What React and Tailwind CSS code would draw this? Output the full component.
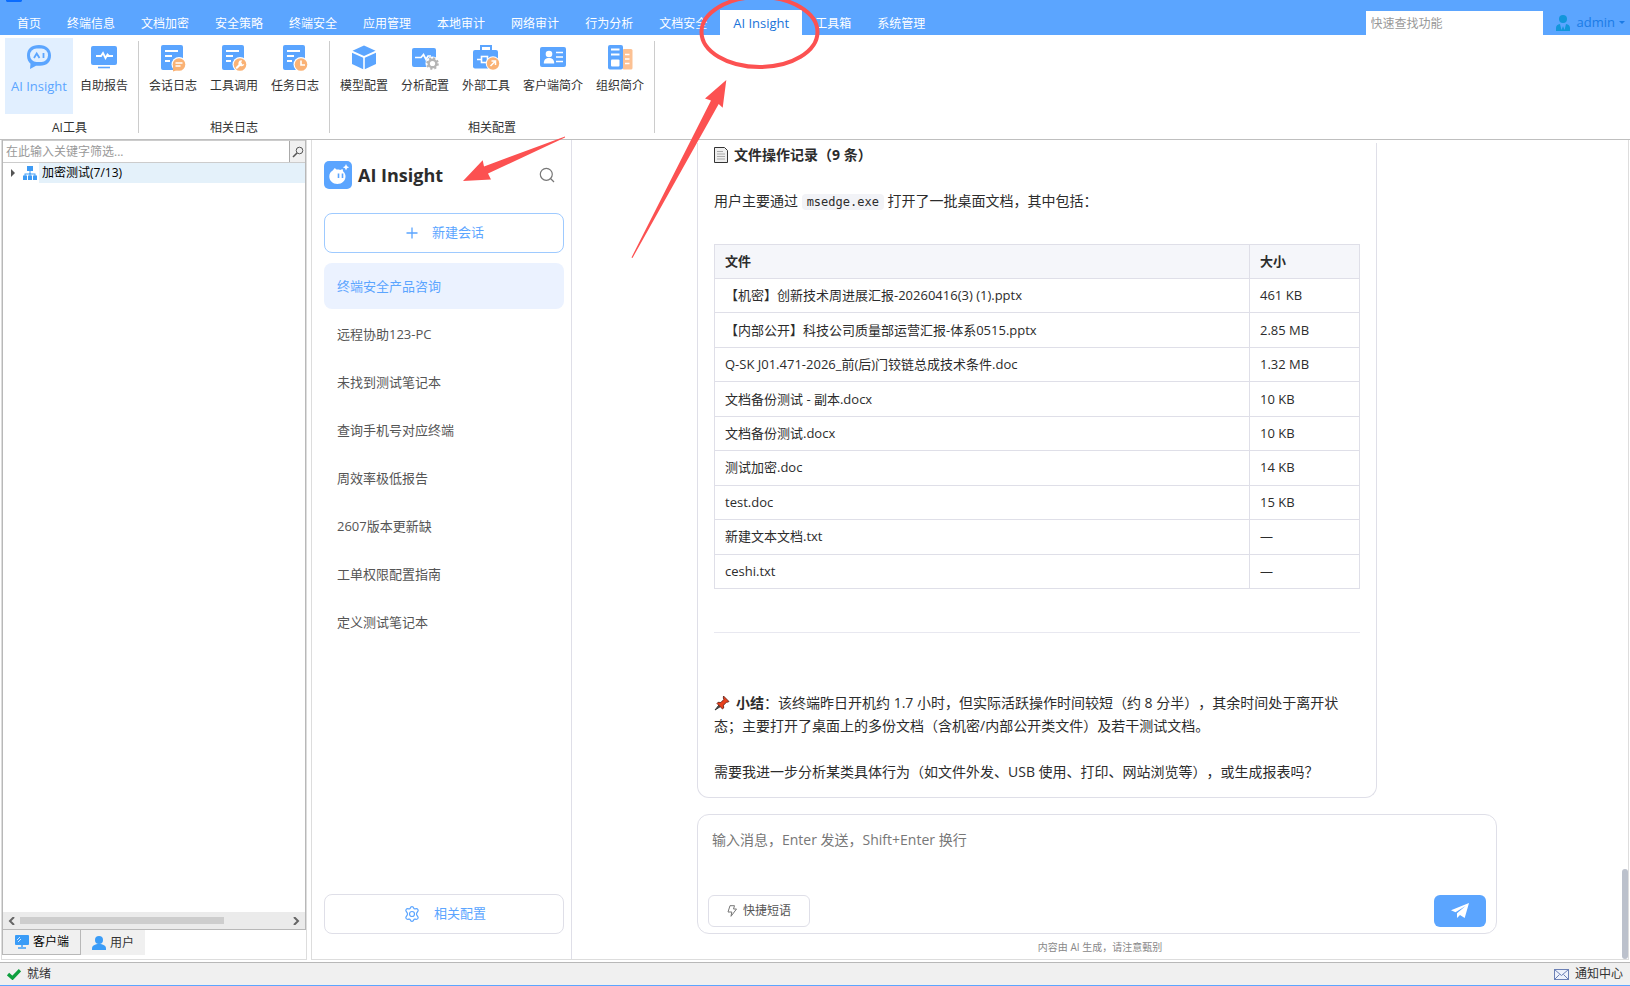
import React, { useState } from 'react';

const menus = [
  '首页', '终端信息', '文档加密', '安全策略', '终端安全', '应用管理', '本地审计',
  '网络审计', '行为分析', '文档安全', 'AI Insight', '工具箱', '系统管理',
];

const sessions = [
  '终端安全产品咨询', '远程协助123-PC', '未找到测试笔记本', '查询手机号对应终端',
  '周效率极低报告', '2607版本更新缺', '工单权限配置指南', '定义测试笔记本',
];

const files = [
  ['【机密】创新技术周进展汇报-20260416(3) (1).pptx', '461 KB'],
  ['【内部公开】科技公司质量部运营汇报-体系0515.pptx', '2.85 MB'],
  ['Q-SK J01.471-2026_前(后)门铰链总成技术条件.doc', '1.32 MB'],
  ['文档备份测试 - 副本.docx', '10 KB'],
  ['文档备份测试.docx', '10 KB'],
  ['测试加密.doc', '14 KB'],
  ['test.doc', '15 KB'],
  ['新建文本文档.txt', '—'],
  ['ceshi.txt', '—'],
];

const BLUE = '#5ba5ff';
const ORANGE = '#fab275';

function Icon({ children, className = 'size-7' }) {
  return (
    <svg viewBox="0 0 28 28" className={className} fill="none" aria-hidden="true">
      {children}
    </svg>
  );
}

function ChatIcon() {
  return (
    <Icon>
      <path d="M14 1C6.500 1 2 5 2 11.500c0 4 1.500 6.500 3.500 8.200L5 25l6-3.200h4c7 0 11-4 11-10.300S21.500 1 14 1z" fill={BLUE} />
      <rect x="5" y="4.500" width="18" height="13.500" rx="6.500" fill="#e1efff" />
      <path d="M9 14l2.700-4.500 2.800 4.500M18.500 9v5" stroke={BLUE} strokeWidth="1.800" />
    </Icon>
  );
}

function ReportIcon() {
  return (
    <Icon>
      <rect x="1" y="2" width="26" height="19" rx="2" fill={BLUE} />
      <path d="M6 12h5l2-3 2.500 5 2-3.500 1.500 1.500h4" stroke="#fff" strokeWidth="1.800" />
      <path d="M8 23.500h12" stroke={BLUE} strokeWidth="1.600" />
    </Icon>
  );
}

function LogPage({ children }) {
  return (
    <Icon>
      <rect x="2" y="1" width="22" height="25" rx="2" fill={BLUE} />
      <path d="M6 7h13M6 12h7M6 17h5" stroke="#fff" strokeWidth="1.800" />
      <circle cx="20" cy="20.500" r="7.500" fill="#fff" />
      <circle cx="20" cy="20.500" r="6.300" fill={ORANGE} />
      {children}
    </Icon>
  );
}

function SessionLogIcon() {
  return (
    <LogPage>
      <path d="M14 21v6.500l5-1.500z" fill={ORANGE} />
      <path d="M16.500 19h7M16.500 22h5" stroke="#fff" strokeWidth="1.500" />
    </LogPage>
  );
}

function ToolCallIcon() {
  return (
    <LogPage>
      <path d="M16.800 23.700l4-4" stroke="#fff" strokeWidth="2.200" strokeLinecap="round" />
      <path d="M22 16.300a3 3 0 1 0 2.300 3.800l-2 .300-1.200-1.300z" fill="#fff" />
    </LogPage>
  );
}

function TaskLogIcon() {
  return (
    <LogPage>
      <path d="M20 16.500V21h4" stroke="#fff" strokeWidth="1.600" />
    </LogPage>
  );
}

function CubeIcon() {
  return (
    <Icon>
      <path d="M14 1.500l11.500 5.200L14 12 2.500 6.700z" fill={BLUE} />
      <path d="M2 8.800l11.200 5v11.500L2 20zM26 8.800l-11.200 5v11.500L26 20z" fill={BLUE} />
    </Icon>
  );
}

function AnalyzeIcon() {
  return (
    <Icon>
      <rect x="1" y="4" width="24" height="19" rx="2" fill={BLUE} />
      <path d="M4 13.500h6l2.500-3 2.500 5 2-3.500h3" stroke="#fff" strokeWidth="1.700" />
      <circle cx="21.500" cy="19.500" r="7" fill="#fff" />
      <circle cx="21.500" cy="19.500" r="5" fill="#b5b5b5" />
      <circle cx="21.500" cy="19.500" r="5.300" stroke="#b5b5b5" strokeWidth="2" strokeDasharray="2.100 2.060" />
      <circle cx="21.500" cy="19.500" r="2.600" fill="#fff" />
    </Icon>
  );
}

function ToolboxIcon() {
  return (
    <Icon>
      <path d="M9 6.500V2h10v4.500" stroke={BLUE} strokeWidth="2" />
      <rect x="1" y="6" width="25" height="18.500" rx="2" fill={BLUE} />
      <path d="M5 15.500h5m5 0h5" stroke="#fff" strokeWidth="1.600" />
      <rect x="9.500" y="12.500" width="6" height="6" stroke="#fff" strokeWidth="1.600" />
      <circle cx="21" cy="19.500" r="7.200" fill="#fff" />
      <circle cx="21" cy="19.500" r="6.200" fill={ORANGE} />
      <path d="M18.500 22l5-5m-4 0h4v4" stroke="#fff" strokeWidth="1.500" />
    </Icon>
  );
}

function ProfileIcon() {
  return (
    <Icon>
      <rect x="1" y="3" width="26" height="20" rx="2" fill={BLUE} />
      <circle cx="10" cy="10" r="3.300" fill="#fff" />
      <path d="M4.800 19.500c0-4 2-5.500 5.200-5.500s5.200 1.500 5.200 5.500z" fill="#fff" />
      <path d="M17 8.500h7M17 13h7M17 17.500h7" stroke="#fff" strokeWidth="1.600" />
    </Icon>
  );
}

function OrgIcon() {
  return (
    <Icon>
      <rect x="16.500" y="5" width="10" height="20.500" rx="1.500" fill="#fcc193" />
      <path d="M19 10.500h4.500M19 15h4.500M19 19.500h4.500" stroke="#fff" strokeWidth="1.600" />
      <rect x="2" y="1" width="15" height="24.500" rx="2" fill={BLUE} />
      <path d="M5 5.500h8.500M5 10.500h8.500" stroke="#fff" strokeWidth="1.800" />
      <rect x="5" y="15.500" width="8.500" height="7" rx="1" fill="#fff" />
    </Icon>
  );
}

const groups = [
  { name: 'AI工具', items: [['AI Insight', ChatIcon], ['自助报告', ReportIcon]] },
  { name: '相关日志', items: [['会话日志', SessionLogIcon], ['工具调用', ToolCallIcon], ['任务日志', TaskLogIcon]] },
  {
    name: '相关配置',
    items: [
      ['模型配置', CubeIcon], ['分析配置', AnalyzeIcon], ['外部工具', ToolboxIcon],
      ['客户端简介', ProfileIcon], ['组织简介', OrgIcon],
    ],
  },
];

function TopMenu({ active, onChange }) {
  return (
    <header className="flex h-[35px] shrink-0 items-end justify-between bg-[#5ba5ff] pl-1 text-xs text-white">
      <nav className="flex">
        {menus.map((name) => (
          <button
            key={name}
            type="button"
            onClick={() => onChange(name)}
            className={`h-[25px] whitespace-nowrap px-[13px] pt-[3px] ${
              name === active ? 'bg-white text-[13px] text-[#1a73d9]' : ''
            }`}
          >
            {name}
          </button>
        ))}
      </nav>
      <div className="flex items-center">
        <input
          type="text"
          aria-label="快速查找功能"
          placeholder="快速查找功能"
          className="h-6 w-[177px] bg-white px-[5px] text-black outline-none placeholder:text-[#999]"
        />
        <button type="button" className="flex items-center gap-[7px] pr-[5px] pl-[13px] text-[13px] text-[#1a7be6]">
          <svg viewBox="0 0 14 16" className="h-4 w-[14px]" fill="#1296db" aria-hidden="true">
            <circle cx="7" cy="4" r="4" />
            <path d="M0 16v-3c0-2.500 1.500-3.500 4-4l1.500 6L7 11l1.500 4L10 9c2.500.500 4 1.500 4 4v3z" />
          </svg>
          <span className="flex items-center gap-1">
            admin
            <svg viewBox="0 0 6 4" className="h-1 w-[6px]" aria-hidden="true">
              <path d="M0 0h6L3 3z" fill="#1a7be6" />
            </svg>
          </span>
        </button>
      </div>
    </header>
  );
}

function Ribbon() {
  return (
    <div className="flex h-[105px] shrink-0 gap-px border-b border-[#bfbfbf] bg-white pl-px text-xs text-[#333]">
      {groups.map((group) => (
        <section key={group.name} className="relative flex flex-col items-center justify-between px-1 pt-[3px] pb-[3px]">
          <div className="flex gap-px">
            {group.items.map(([label, Glyph]) => (
              <button
                key={label}
                type="button"
                className={`flex h-[76px] flex-col items-center gap-[6px] px-[6px] pt-[6px] whitespace-nowrap ${
                  label === 'AI Insight' ? 'bg-[#e1efff] text-[13px] text-[#5ba5ff]' : ''
                }`}
              >
                <Glyph />
                <span className="leading-4">{label}</span>
              </button>
            ))}
          </div>
          <h2 className="leading-4">{group.name}</h2>
          <span className="absolute top-[6px] -right-px bottom-[6px] w-px bg-[#ccc]" />
        </section>
      ))}
    </div>
  );
}

function ClientTree() {
  return (
    <aside className="ml-px flex w-[306px] shrink-0 flex-col border-r border-b border-l border-[#ddd] bg-white text-xs">
      <div className="flex flex-1 flex-col border-x border-[#b8b8b8]">
        <div className="flex h-[23px] border-y border-[#ccc]">
          <input
            type="text"
            aria-label="筛选终端"
            placeholder="在此输入关键字筛选..."
            className="min-w-0 flex-1 px-[3px] outline-none placeholder:text-[#999]"
          />
          <button type="button" aria-label="筛选" className="flex w-4 items-center justify-center border-l border-[#aaa] bg-[#f0f0f0]">
            <svg viewBox="0 0 12 12" className="size-3" fill="none" stroke="#555" aria-hidden="true">
              <circle cx="7.500" cy="4.500" r="3.300" />
              <path d="M5 7L1 11" strokeWidth="1.600" />
            </svg>
          </button>
        </div>
        <button type="button" className="flex h-5 items-center text-left">
          <svg viewBox="0 0 36 20" className="h-5 w-9 shrink-0" aria-hidden="true">
            <path d="M8 6l4 4-4 4z" fill="#555" />
            <g fill="#3d9bf5">
              <rect x="24" y="3" width="6" height="5" />
              <path d="M26.500 8h1v2.500H32.500V13h-1v-1.500h-9V13h-1v-2.500h5z" />
              <rect x="20" y="12.500" width="4" height="4.500" />
              <rect x="25" y="12.500" width="4" height="4.500" />
              <rect x="30" y="12.500" width="4" height="4.500" />
              <rect x="26.500" y="10" width="1" height="3" />
            </g>
          </svg>
          <span className="h-full flex-1 bg-[#e4f1fa] pl-[3px] leading-5 text-black">加密测试(7/13)</span>
        </button>
        <div className="flex-1" />
        <div className="flex h-[18px] items-center justify-between border-b border-[#b8b8b8] bg-[#ebebeb] px-[5px]">
          <svg viewBox="0 0 7 8" className="h-2 w-[7px]" fill="none" stroke="#666" strokeWidth="2" aria-hidden="true">
            <path d="M6 0L2 4l4 4" />
          </svg>
          <span className="mr-auto ml-[5px] h-[7px] w-[70%] bg-[#cdcdcd]" />
          <svg viewBox="0 0 7 8" className="h-2 w-[7px]" fill="none" stroke="#666" strokeWidth="2" aria-hidden="true">
            <path d="M1 0l4 4-4 4" />
          </svg>
        </div>
      </div>
      <div className="flex h-[29px] items-start">
        <button type="button" className="flex h-[25px] w-[79px] items-center gap-1 border-r border-b border-l border-[#b8b8b8] bg-[#f0f0f0] pl-3 text-black">
          <svg viewBox="0 0 14 14" className="size-[14px]" aria-hidden="true">
            <rect width="14" height="10" rx="1" fill="#3a9cf7" />
            <path d="M2 5l3-3M3 7l3-3" stroke="#cfe6ff" />
            <path d="M6 10h2v2H6zM3 12h8v2H3z" fill="#6bb2f5" />
          </svg>
          客户端
        </button>
        <button type="button" className="flex h-[25px] w-16 items-center gap-1 bg-[#f0f0f0] pl-[11px] text-[#333]">
          <svg viewBox="0 0 14 14" className="size-[14px]" fill="#3a9cf7" aria-hidden="true">
            <circle cx="7" cy="4" r="4" />
            <path d="M0 14v-1.500C0 9.500 3 8 7 8s7 1.500 7 4.500V14z" />
          </svg>
          用户
        </button>
      </div>
    </aside>
  );
}

function Sessions() {
  const [current, setCurrent] = useState(0);

  return (
    <section className="flex w-[260px] shrink-0 flex-col border-r border-[#dfdfe8] pt-[21px] pr-[7px] pb-[25px] pl-3">
      <div className="flex h-7 items-center">
        <svg viewBox="0 0 28 28" className="size-7" fill="none" aria-hidden="true">
          <rect width="28" height="28" rx="5" fill="#5ba5ff" />
          <path d="M5.300 15.500c0-2.700 1.500-4.800 3.400-5.900L10.800 7l1.700 1.500c1.300-.100 2.500 0 3.700.400L18.500 8l.700 2.500c1.500 1.200 2.300 3 2.300 5 0 4.300-3.500 7.500-8.100 7.500s-8.100-3.200-8.100-7.500z" fill="#fff" />
          <path d="M14.500 12.500v4.500M18.500 12.500v4.500" stroke="#5ba5ff" strokeWidth="1.600" />
          <path d="M22 3l1 2.200 2.200 1-2.200 1L22 9.500l-1-2.300-2.200-1 2.200-1z" fill="#fff" />
        </svg>
        <h1 className="ml-[6px] flex-1 text-lg font-bold text-[#2c2c2c]">AI Insight</h1>
        <button type="button" aria-label="搜索会话" className="mr-[9px]">
          <svg viewBox="0 0 16 16" className="size-4" fill="none" stroke="#777" strokeWidth="1.200" aria-hidden="true">
            <circle cx="7.300" cy="7.300" r="6" />
            <path d="M11.500 11.500l3.500 3.500" />
          </svg>
        </button>
      </div>

      <button type="button" className="mt-6 flex h-10 shrink-0 items-center justify-center gap-[14px] rounded-lg border border-[#9ecaff] pl-[2px] text-[13px] text-[#5ba5ff]">
        <svg viewBox="0 0 12 12" className="size-3" stroke="#5ba5ff" strokeWidth="1.300" aria-hidden="true">
          <path d="M6 .500v11M.500 6h11" />
        </svg>
        新建会话
      </button>

      <ul className="mt-[10px] flex flex-1 flex-col gap-[2px] text-[13px]">
        {sessions.map((name, index) => (
          <li key={name}>
            <button
              type="button"
              onClick={() => setCurrent(index)}
              className={`h-[46px] w-full rounded-lg px-[13px] pt-[2px] text-left ${
                index === current ? 'bg-[#ebf2ff] text-[#5ba5ff]' : 'text-[#555]'
              }`}
            >
              {name}
            </button>
          </li>
        ))}
      </ul>

      <button type="button" className="flex h-10 shrink-0 items-center justify-center gap-[14px] rounded-lg border border-[#dfdfe8] pl-[2px] text-[13px] text-[#5ba5ff]">
        <svg viewBox="0 0 16 16" className="size-4" fill="none" stroke="#5ba5ff" strokeWidth="1.200" aria-hidden="true">
          <path d="M6.200 2.200Q6.700.600 8 .600t1.800 1.600q.300.900 1.500.600 1.800-.500 2.600.700t-.500 2.500q-.900.900-.900 2t.900 2q1.300 1.300.500 2.500t-2.600.700q-1.200-.300-1.500.600-.500 1.600-1.800 1.600t-1.800-1.600q-.300-.900-1.500-.600-1.800.500-2.600-.700t.500-2.500q.900-.900.900-2t-.900-2Q1.300 4.700 2.100 3.500t2.600-.700q1.200.300 1.500-.600z" />
          <circle cx="8" cy="8" r="2.500" />
        </svg>
        相关配置
      </button>
    </section>
  );
}

function Answer() {
  return (
    <article className="w-[85%] rounded-b-xl border-x border-b border-[#dfdfe8] px-4 pb-[14px] text-sm leading-[23px] text-[#2c2c2c] [text-spacing-trim:space-all]">
      <h3 className="flex items-center gap-[6px] font-bold">
        <svg viewBox="0 0 14 16" className="h-4 w-[14px]" fill="#eee" stroke="#333" aria-hidden="true">
          <path d="M.500.500h10l3 3v12H.500z" />
          <path d="M3 4.500h6M3 7h8M3 9.500h8M3 12h8" stroke="#aaa" />
        </svg>
        文件操作记录（9 条）
      </h3>
      <p className="mt-[23px]">
        用户主要通过{' '}
        <code className="rounded bg-[#f2f3f7] px-[5px] py-px font-['DejaVu_Sans_Mono',monospace] text-xs">msedge.exe</code>
        {' '}打开了一批桌面文档，其中包括：
      </p>
      <table className="mt-8 h-[345px] w-full border-collapse text-left text-[13px] leading-[21px]">
        <thead>
          <tr className="bg-[#f5f6fa]">
            <th className="border border-[#dfdfe8] px-[10px] py-[6px]">文件</th>
            <th className="w-[110px] border border-[#dfdfe8] px-[10px] py-[6px]">大小</th>
          </tr>
        </thead>
        <tbody>
          {files.map(([name, size]) => (
            <tr key={name}>
              <td className="border border-[#dfdfe8] px-[10px] py-[6px]">{name}</td>
              <td className="border border-[#dfdfe8] px-[10px] py-[6px]">{size}</td>
            </tr>
          ))}
        </tbody>
      </table>
      <hr className="mt-[43px] border-[#e8e8f0]" />
      <p className="mt-[58px]">
        <svg viewBox="0 0 16 16" className="mr-[6px] inline size-4 align-[-3px]" aria-hidden="true">
          <path d="M1 15l4-5 1.500 1.500z" fill="#555" stroke="#333" />
          <path d="M9.500 1l5.500 5.500-1.500.700-1 0-3 3 .200 2.800-1.200 1L3 8.500l1-1.200 2.800.200 3-3-.500-1.500z" fill="#e8401c" stroke="#5a1a10" strokeWidth=".800" />
        </svg>
        <strong>小结</strong>：该终端昨日开机约 1.7 小时，但实际活跃操作时间较短（约 8 分半），其余时间处于离开状态；主要打开了桌面上的多份文档（含机密/内部公开类文件）及若干测试文档。
      </p>
      <p className="mt-[23px]">需要我进一步分析某类具体行为（如文件外发、USB 使用、打印、网站浏览等），或生成报表吗？</p>
    </article>
  );
}

function Composer() {
  const [message, setMessage] = useState('');

  return (
    <form onSubmit={(e) => e.preventDefault()} className="flex h-[120px] flex-col rounded-xl border border-[#dfdfe8] pt-[13px] pr-[10px] pb-[6px] pl-[10px]">
      <textarea
        aria-label="输入消息"
        value={message}
        onChange={(e) => setMessage(e.target.value)}
        placeholder="输入消息，Enter 发送，Shift+Enter 换行"
        className="min-h-0 w-full flex-1 resize-none px-1 text-sm leading-[23px] outline-none placeholder:text-[#777]"
      />
      <div className="flex justify-between">
        <button type="button" className="flex h-8 items-center gap-[6px] rounded-md border border-[#dfdfe8] px-[18px] text-xs text-[#555]">
          <svg viewBox="0 0 10 12" className="h-3 w-[10px]" fill="none" stroke="#777" aria-hidden="true">
            <path d="M3 .700h4.500L6.500 4h3L4 11.300 4.800 7H1z" />
          </svg>
          快捷短语
        </button>
        <button type="submit" aria-label="发送" className="flex h-8 w-[52px] items-center justify-center rounded-md bg-[#5ba5ff]">
          <svg viewBox="0 0 18 16" className="h-4 w-[18px]" fill="#fff" aria-hidden="true">
            <path d="M18 0L0 7.300l4.500 1.900L14.500 3 6 10.300V15l3-3 4.700 3z" />
          </svg>
        </button>
      </div>
    </form>
  );
}

function StatusBar() {
  return (
    <footer className="flex h-6 shrink-0 items-center justify-between border-t border-b border-t-[#b8b8b8] border-b-[#5ba5ff] bg-[#f0f0f0] pr-[7px] pl-[7px] text-xs text-[#333]">
      <span className="flex items-center gap-[6px]">
        <svg viewBox="0 0 14 11" className="h-[11px] w-[14px]" fill="none" stroke="#0e9f3e" strokeWidth="3.400" aria-hidden="true">
          <path d="M1 5l4.500 4L13 1.200" />
        </svg>
        就绪
      </span>
      <button type="button" className="flex items-center gap-[6px]">
        <svg viewBox="0 0 15 11" className="h-[11px] w-[15px]" fill="#eef2fb" stroke="#6c80b5" aria-hidden="true">
          <rect x=".500" y=".500" width="14" height="10" />
          <path d="M.500.500l7 6 7-6M.500 10.500l5-5M14.500 10.500l-5-5" fill="none" />
        </svg>
        通知中心
      </button>
    </footer>
  );
}

function Annotations() {
  return (
    <svg className="pointer-events-none absolute top-0 left-0 h-[260px] w-[830px]" viewBox="0 0 830 260" fill="#fc5151" aria-hidden="true">
      <path d="M6 0h16v1l-1 1H7L6 1z" fill="#0a6cff" />
      <ellipse cx="759.500" cy="32" rx="58" ry="35" fill="none" stroke="#fc5151" strokeWidth="4" />
      <path d="M463 181l19.700-20.700 1.300 6.200L565 136.500v1L488 173.500l3 6z" />
      <path d="M726.300 80L705 98.500l6 2L631.500 257.500l1 .500L718.700 104l4 3.700z" />
    </svg>
  );
}

export default function App() {
  const [tab, setTab] = useState('AI Insight');

  return (
    <div className="relative flex h-screen flex-col overflow-hidden bg-white font-['Open_Sans','Noto_Sans_CJK_SC',sans-serif]">
      <TopMenu active={tab} onChange={setTab} />
      <Ribbon />
      <div className="flex min-h-0 flex-1 gap-1 pr-px pb-[2px]">
        <ClientTree />
        <main className="flex min-w-0 flex-1 border-x border-b border-[#ddd]">
          <Sessions />
          <div className="flex min-w-0 flex-1 flex-col pb-1">
            <div className="mx-auto flex min-h-0 w-full max-w-[800px] flex-1 flex-col justify-end overflow-hidden">
              <Answer />
            </div>
            <div className="mx-auto mt-4 w-full max-w-[800px]">
              <Composer />
              <p className="mt-[5px] pl-[6px] text-center text-[10px] leading-4 text-[#888]">内容由 AI 生成，请注意甄别</p>
            </div>
          </div>
          <div className="flex w-[6px] shrink-0 flex-col justify-end">
            <span className="h-[90px] rounded-full bg-[#bcc1cc]" />
          </div>
        </main>
      </div>
      <StatusBar />
      <Annotations />
    </div>
  );
}
